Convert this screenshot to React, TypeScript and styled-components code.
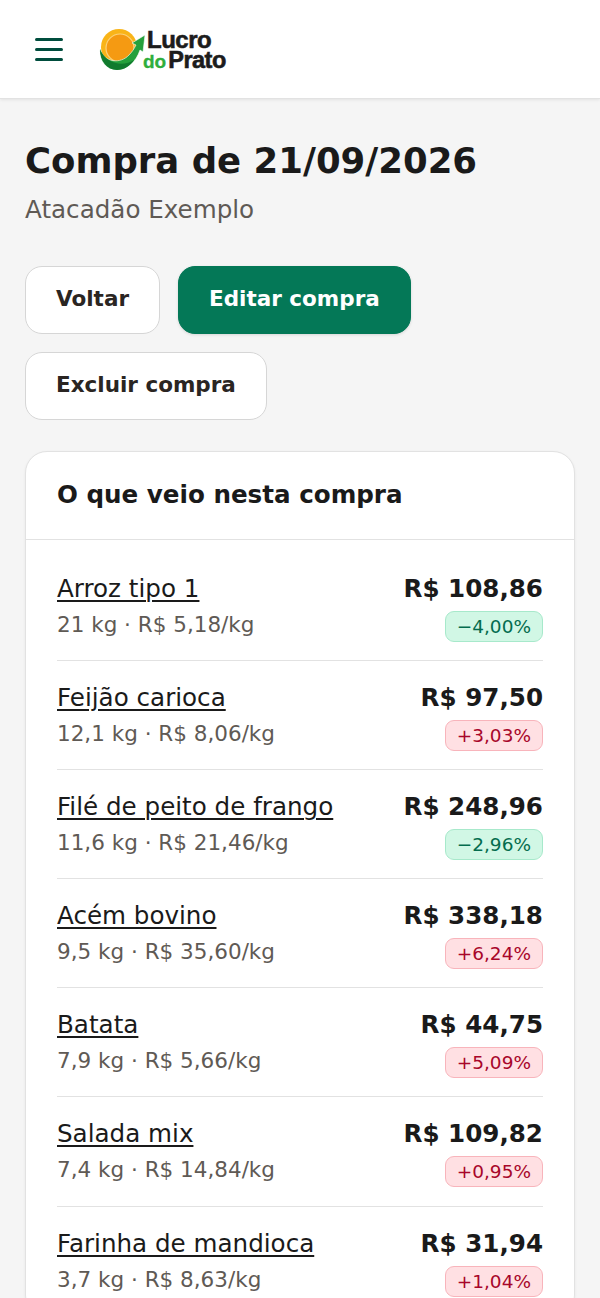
import React from "react";
import styled, { createGlobalStyle } from "styled-components";

const Global = createGlobalStyle`
  html, body { margin: 0; padding: 0; height: 100%; overflow: hidden; background: #f5f5f5; }
  body { font-family: "DejaVu Sans", sans-serif; color: #1a1a1a; }
  * { box-sizing: border-box; }
`;

const Header = styled.header`
  height: 99px;
  background: #fff;
  border-bottom: 1px solid #e2e2e2;
  box-shadow: 0 1px 3px rgba(0,0,0,.08);
  display: flex;
  align-items: center;
  padding: 0 35px;
  gap: 36px;
`;
const Burger = styled.div`
  width: 28px;
  display: flex;
  flex-direction: column;
  gap: 7px;
  & > span { display: block; height: 3px; border-radius: 2px; background: #004d3d; }
`;
const Logo = styled.div`
  position: relative;
  width: 130px;
  height: 44px;
`;
const LogoText = styled.div`
  position: absolute;
  left: 48px;
  top: 3px;
  font-family: "Liberation Sans", sans-serif;
  font-weight: 700;
  color: #1c1c1c;
  line-height: 20px;
  letter-spacing: -.5px;
  font-size: 24px;
  -webkit-text-stroke: .6px #1c1c1c;
  white-space: nowrap;
`;
const LogoLine2 = styled.div`
  margin-left: -4px;
  display: flex;
  align-items: baseline;
  gap: 2px;
  font-size: 23.5px;
  & > em { font-style: normal; font-size: 19px; letter-spacing: 0; color: #2fae3c; -webkit-text-stroke: .3px #2fae3c; }
`;
const Main = styled.main`
  padding: 39px 25px 0;
`;
const Title = styled.h1`
  margin: 0;
  font-size: 35.5px;
  line-height: 46px;
  font-weight: 700;
  color: #1a1a1a;
`;
const Subtitle = styled.p`
  margin: 8px 0 0;
  font-size: 24.6px;
  line-height: 36px;
  color: #5f5a55;
`;
const Actions = styled.div`
  display: flex;
  flex-wrap: wrap;
  gap: 18px 18px;
  margin-top: 38px;
`;
const Button = styled.button<{ $primary?: boolean }>`
  height: 68px;
  padding: 0 30px 3px;
  border-radius: 17px;
  font-family: inherit;
  font-size: 21.5px;
  font-weight: 700;
  border: ${p => (p.$primary ? "1px solid #047857" : "1.5px solid #d6d6d6")};
  background: ${p => (p.$primary ? "#047857" : "#fff")};
  color: ${p => (p.$primary ? "#fff" : "#2a2522")};
  box-shadow: ${p => (p.$primary ? "0 1px 3px rgba(0,0,0,.12)" : "none")};
`;
const Card = styled.section`
  margin-top: 31px;
  background: #fff;
  border: 1.5px solid #e2e2e2;
  border-radius: 22px;
  box-shadow: 0 1px 3px rgba(0,0,0,.06);
`;
const CardHead = styled.h2`
  margin: 0;
  height: 88px;
  padding: 0 31px 2px;
  display: flex;
  align-items: center;
  font-size: 24.6px;
  font-weight: 700;
  border-bottom: 1.5px solid #e2e2e2;
  color: #1a1a1a;
`;
const List = styled.div`
  padding: 12px 31px 0;
`;
const Row = styled.div`
  height: 109.1px;
  display: flex;
  justify-content: space-between;
  align-items: flex-start;
  padding-top: 19px;
  border-bottom: 1.5px solid #e2e2e2;
`;
const Left = styled.div`
  display: flex;
  flex-direction: column;
`;
const Name = styled.a`
  font-size: 24.6px;
  line-height: 36px;
  color: #1a1a1a;
  text-decoration: underline;
  text-decoration-thickness: 1.5px;
  text-underline-offset: 3px;
`;
const Sub = styled.div`
  font-size: 21.5px;
  line-height: 36px;
  color: #5f5a55;
`;
const Right = styled.div`
  display: flex;
  flex-direction: column;
  align-items: flex-end;
`;
const Price = styled.div`
  font-size: 24.6px;
  line-height: 36px;
  font-weight: 700;
  color: #1a1a1a;
`;
const Badge = styled.span<{ $down?: boolean }>`
  margin-top: 4px;
  height: 31px;
  padding: 0 11px;
  display: inline-flex;
  align-items: center;
  font-size: 18.5px;
  border-radius: 9px;
  border: 1.5px solid ${p => (p.$down ? "#a7e9cb" : "#f8b4bb")};
  background: ${p => (p.$down ? "#d1f7e5" : "#ffe0e3")};
  color: ${p => (p.$down ? "#046c4e" : "#a8062a")};
`;

const items = [
  ["Arroz tipo 1", "21 kg · R$ 5,18/kg", "R$ 108,86", "−4,00%", true],
  ["Feijão carioca", "12,1 kg · R$ 8,06/kg", "R$ 97,50", "+3,03%", false],
  ["Filé de peito de frango", "11,6 kg · R$ 21,46/kg", "R$ 248,96", "−2,96%", true],
  ["Acém bovino", "9,5 kg · R$ 35,60/kg", "R$ 338,18", "+6,24%", false],
  ["Batata", "7,9 kg · R$ 5,66/kg", "R$ 44,75", "+5,09%", false],
  ["Salada mix", "7,4 kg · R$ 14,84/kg", "R$ 109,82", "+0,95%", false],
  ["Farinha de mandioca", "3,7 kg · R$ 8,63/kg", "R$ 31,94", "+1,04%", false],
] as const;

function LogoMark() {
  return (
    <svg width="50" height="44" viewBox="0 0 50 44" style={{ position: "absolute", left: 0, top: 0 }}>
      <circle cx="20" cy="20" r="18" fill="#f9b418" />
      <circle cx="21" cy="21" r="14" fill="#f59a12" stroke="#fcd27a" strokeWidth="1.2" />
      <path d="M1 22 C5 36 22 37 30 28 C33 25 35 22 37 18 L33 16 L46 8 L44 25 L41 23 C37 35 28 43 18 43 C8 43 0 34 1 22 Z" fill="#25a03c" stroke="#fff" strokeWidth=".6" />
      <path d="M1 22 C1 34 8 43 18 43 C25 43 31 39 35 33 C26 39 8 39 1 22 Z" fill="#117a2e" />
    </svg>
  );
}

export default function App() {
  return (
    <>
      <Global />
      <Header>
        <Burger><span /><span /><span /></Burger>
        <Logo>
          <LogoMark />
          <LogoText>
            Lucro
            <LogoLine2><em>do</em>Prato</LogoLine2>
          </LogoText>
        </Logo>
      </Header>
      <Main>
        <Title>Compra de 21/09/2026</Title>
        <Subtitle>Atacadão Exemplo</Subtitle>
        <Actions>
          <Button>Voltar</Button>
          <Button $primary>Editar compra</Button>
          <Button>Excluir compra</Button>
        </Actions>
        <Card>
          <CardHead>O que veio nesta compra</CardHead>
          <List>
            {items.map(([n, s, p, b, d]) => (
              <Row key={n}>
                <Left>
                  <Name>{n}</Name>
                  <Sub>{s}</Sub>
                </Left>
                <Right>
                  <Price>{p}</Price>
                  <Badge $down={d}>{b}</Badge>
                </Right>
              </Row>
            ))}
          </List>
        </Card>
      </Main>
    </>
  );
}
